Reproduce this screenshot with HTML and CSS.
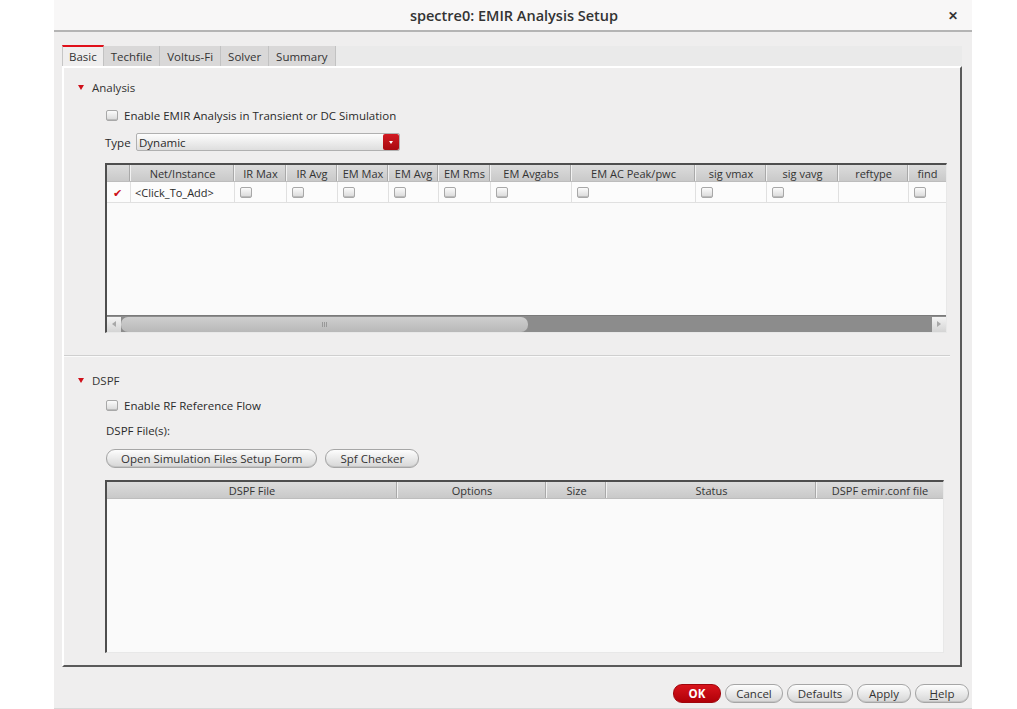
FILE: index.html
```html
<!DOCTYPE html>
<html>
<head>
<meta charset="utf-8">
<link rel="stylesheet" href="styles.css">
</head>
<body>
<div class="dialog">
  <div class="titlebar">
    <span class="title">spectre0: EMIR Analysis Setup</span>
    <span class="close">&#x2715;</span>
  </div>
  <div class="tabs">
    <div class="tab active">Basic</div>
    <div class="tab">Techfile</div>
    <div class="tab">Voltus-Fi</div>
    <div class="tab">Solver</div>
    <div class="tab">Summary</div>
  </div>
  <div class="panel">
    <div class="section-head"><span class="tri"></span>Analysis</div>
    <div class="indent">
      <label class="check-row"><span class="cb"></span>Enable EMIR Analysis in Transient or DC Simulation</label>
      <div class="type-row">
        <span class="type-label">Type</span>
        <div class="combo"><span class="combo-text">Dynamic</span><span class="combo-btn"><span class="combo-arrow"></span></span></div>
      </div>
      <div class="grid-table t1">
        <div class="thead">
          <div class="th"></div>
          <div class="th">Net/Instance</div>
          <div class="th">IR Max</div>
          <div class="th">IR Avg</div>
          <div class="th">EM Max</div>
          <div class="th">EM Avg</div>
          <div class="th">EM Rms</div>
          <div class="th">EM Avgabs</div>
          <div class="th">EM AC Peak/pwc</div>
          <div class="th">sig vmax</div>
          <div class="th">sig vavg</div>
          <div class="th">reftype</div>
          <div class="th last">find</div>
        </div>
        <div class="trow">
          <div class="td"><span class="tick">&#x2714;</span></div>
          <div class="td txt">&lt;Click_To_Add&gt;</div>
          <div class="td"><span class="cb"></span></div>
          <div class="td"><span class="cb"></span></div>
          <div class="td"><span class="cb"></span></div>
          <div class="td"><span class="cb"></span></div>
          <div class="td"><span class="cb"></span></div>
          <div class="td"><span class="cb"></span></div>
          <div class="td"><span class="cb"></span></div>
          <div class="td"><span class="cb"></span></div>
          <div class="td"><span class="cb"></span></div>
          <div class="td"></div>
          <div class="td last"><span class="cb"></span></div>
        </div>
        <div class="tbody-fill"></div>
        <div class="hscroll">
          <span class="arrow left"></span>
          <span class="track"><span class="thumb"><span class="grip"></span></span></span>
          <span class="arrow right"></span>
        </div>
      </div>
    </div>
    <div class="separator"></div>
    <div class="section-head dspf"><span class="tri"></span>DSPF</div>
    <div class="indent">
      <label class="check-row rf"><span class="cb"></span>Enable RF Reference Flow</label>
      <div class="files-label">DSPF File(s):</div>
      <div class="btn-row">
        <button class="pill">Open Simulation Files Setup Form</button>
        <button class="pill">Spf Checker</button>
      </div>
      <div class="grid-table t2">
        <div class="thead">
          <div class="th">DSPF File</div>
          <div class="th">Options</div>
          <div class="th">Size</div>
          <div class="th">Status</div>
          <div class="th last">DSPF emir.conf file</div>
        </div>
        <div class="tbody-fill"></div>
      </div>
    </div>
  </div>
  <div class="footer">
    <button class="pill ok">OK</button>
    <button class="pill">Cancel</button>
    <button class="pill">Defaults</button>
    <button class="pill">Apply</button>
    <button class="pill"><u>H</u>elp</button>
  </div>
</div>
</body>
</html>
```
FILE: styles.css
```css
html, body {
  margin: 0;
  padding: 0;
  background: #ffffff;
}
body {
  font-family: "Open Sans", "Noto Sans", sans-serif;
  font-size: 11.5px;
  color: #2a2a2a;
}
.dialog {
  margin-left: 54px;
  width: 918px;
  height: 709px;
  background: #efeeee;
  display: flex;
  flex-direction: column;
  box-sizing: border-box;
  border-bottom: 1px solid #d8d8d8;
}
.titlebar {
  height: 30px;
  flex: none;
  background: #f8f7f7;
  border-bottom: 2px solid #b4b4b4;
  display: flex;
  align-items: center;
  justify-content: center;
  position: relative;
}
.title {
  font-size: 14.5px;
  font-weight: 600;
  color: #333;
  margin-left: 2px;
}
.close {
  position: absolute;
  right: 14px;
  top: 7px;
  font-size: 12px;
  font-weight: 700;
  color: #333;
}
.tabs {
  margin: 14px 10px 0 8px;
  height: 20px;
  flex: none;
  display: flex;
  background: #eaeaea;
}
.tab {
  height: 20px;
  box-sizing: border-box;
  padding: 0 7px;
  display: flex;
  align-items: center;
  background: #d9d8d8;
  border-right: 1px solid #c2c2c2;
  color: #333;
  font-size: 11.5px;
}
.tab.active {
  background: #efeeee;
  border-top: 2px solid #e0101a;
  border-left: 1px solid #c6c6c6;
  padding: 0 6px 1px 6px;
  height: 21px;
  margin-top: -1px;
}
.panel {
  margin: 0 10px 0 8px;
  height: 601px;
  flex: none;
  box-sizing: border-box;
  border-top: 2px solid #ffffff;
  border-left: 2px solid #ffffff;
  border-right: 2px solid #5a5a5a;
  border-bottom: 2px solid #5a5a5a;
  padding-top: 11px;
}
.section-head {
  height: 16px;
  display: flex;
  align-items: center;
  padding-left: 14px;
  color: #333;
}
.tri {
  width: 0;
  height: 0;
  border-left: 3.5px solid transparent;
  border-right: 3.5px solid transparent;
  border-top: 5px solid #d0101a;
  margin-right: 8px;
  margin-top: 1px;
}
.indent {
  margin-left: 41px;
  margin-right: 11px;
}
.check-row {
  display: flex;
  align-items: center;
  height: 16px;
  margin-top: 12px;
}
.check-row .cb {
  margin-left: 1px;
  margin-right: 6px;
}
.cb {
  display: inline-block;
  width: 10px;
  height: 9px;
  border: 1px solid #a8a8a8;
  border-radius: 2px;
  background: linear-gradient(#fbfbfb, #d9d9d9);
  box-shadow: inset 0 -1px 0 #bbb;
}
.type-row {
  display: flex;
  align-items: center;
  height: 18px;
  margin-top: 10px;
}
.type-label {
  width: 31px;
}
.combo {
  width: 264px;
  height: 18px;
  box-sizing: border-box;
  border: 1px solid #b0b0b0;
  border-radius: 2px;
  background: linear-gradient(#fdfdfd, #dedede);
  display: flex;
  align-items: center;
  justify-content: space-between;
}
.combo-text {
  padding-left: 2px;
}
.combo-btn {
  width: 16px;
  height: 16px;
  background: linear-gradient(#d21a22, #a80a10);
  border-radius: 2px;
  display: flex;
  align-items: center;
  justify-content: center;
}
.combo-arrow {
  width: 0;
  height: 0;
  border-left: 2.5px solid transparent;
  border-right: 2.5px solid transparent;
  border-top: 3px solid #ffffff;
}
.grid-table {
  box-sizing: border-box;
  border-top: 2px solid #4e4e4e;
  border-left: 2px solid #4e4e4e;
  border-right: 1px solid #e8e8e8;
  border-bottom: 1px solid #e8e8e8;
  background: #fafafa;
  display: flex;
  flex-direction: column;
}
.t1 {
  margin-top: 12px;
  width: 842px;
  height: 170px;
}
.t2 {
  margin-top: 12px;
  width: 839px;
  height: 173px;
}
.thead, .trow {
  display: grid;
}
.t1 .thead, .t1 .trow {
  grid-template-columns: 24px 104px 52px 51px 51px 50px 52px 81px 124px 71px 72px 70px 1fr;
}
.t2 .thead {
  grid-template-columns: 291px 149px 60px 210px 1fr;
}
.thead {
  height: 16px;
  background: linear-gradient(#dcdcdc, #c9c9c9);
  border-bottom: 1px solid #bdbdbd;
}
.th {
  display: flex;
  align-items: center;
  justify-content: center;
  border-right: 1px solid #f2f2f2;
  box-shadow: inset -1px 0 0 #a9a9a9;
  color: #333;
  white-space: nowrap;
  overflow: hidden;
  font-size: 11px;
}
.th.last {
  border-right: none;
  box-shadow: none;
}
.trow {
  height: 20px;
  background: #fcfcfc;
  border-bottom: 1px solid #e0e0e0;
}
.td {
  display: flex;
  align-items: center;
  padding-left: 5px;
  border-right: 1px solid #e0e0e0;
}
.td.txt {
  padding-left: 4px;
  font-size: 11px;
}
.td.last {
  border-right: none;
}
.tick {
  color: #cc1018;
  font-size: 11px;
  margin-left: 1px;
}
.tbody-fill {
  flex: 1;
}
.hscroll {
  height: 16px;
  display: flex;
  align-items: center;
  background: #8c8c8c;
  border-top: 1px solid #7a7a7a;
}
.arrow {
  width: 14px;
  height: 15px;
  background: linear-gradient(#f3f3f3, #d4d4d4);
  display: flex;
  align-items: center;
  justify-content: center;
}
.arrow::after {
  content: "";
  width: 0;
  height: 0;
  border-top: 3px solid transparent;
  border-bottom: 3px solid transparent;
}
.arrow.left::after {
  border-right: 4px solid #a8a8a8;
}
.arrow.right::after {
  border-left: 4px solid #a8a8a8;
}
.track {
  flex: 1;
  height: 15px;
  display: flex;
}
.thumb {
  width: 407px;
  height: 15px;
  border-radius: 7px;
  background: linear-gradient(#cfcfcf, #b8b8b8);
  display: flex;
  align-items: center;
  justify-content: center;
}
.grip {
  width: 6px;
  height: 5px;
  background: repeating-linear-gradient(90deg, #999 0 1px, transparent 1px 2px);
}
.separator {
  margin: 22px 10px 0 0;
  height: 1px;
  background: #cfcfcf;
  border-bottom: 1px solid #fafafa;
}
.section-head.dspf {
  margin-top: 15px;
}
.check-row.rf {
  margin-top: 9px;
}
.files-label {
  height: 16px;
  line-height: 16px;
  margin-top: 10px;
  padding-left: 1px;
}
.btn-row {
  display: flex;
  gap: 8px;
  margin-top: 10px;
  padding-left: 1px;
}
.pill {
  font-family: "Open Sans", "Noto Sans", sans-serif;
  font-size: 11.5px;
  color: #333;
  height: 19px;
  padding: 0 14px;
  border: 1px solid #a6a6a6;
  border-radius: 9px;
  background: linear-gradient(#fdfdfd, #d6d6d6);
  box-shadow: inset 0 -1px 0 #c4c4c4;
  display: flex;
  align-items: center;
  justify-content: center;
}
.footer {
  display: flex;
  justify-content: flex-end;
  gap: 4px;
  margin-top: 17px;
  padding-right: 3px;
}
.footer .pill {
  height: 19px;
  padding: 0;
}
.footer .pill:nth-child(2) { width: 58px; }
.footer .pill:nth-child(3) { width: 66px; }
.footer .pill:nth-child(4) { width: 54px; }
.footer .pill:nth-child(5) { width: 54px; }
.pill.ok {
  width: 48px;
  background: linear-gradient(#d8141c, #b00008);
  border-color: #a0060c;
  color: #ffffff;
  font-weight: 700;
  box-shadow: none;
}
```
